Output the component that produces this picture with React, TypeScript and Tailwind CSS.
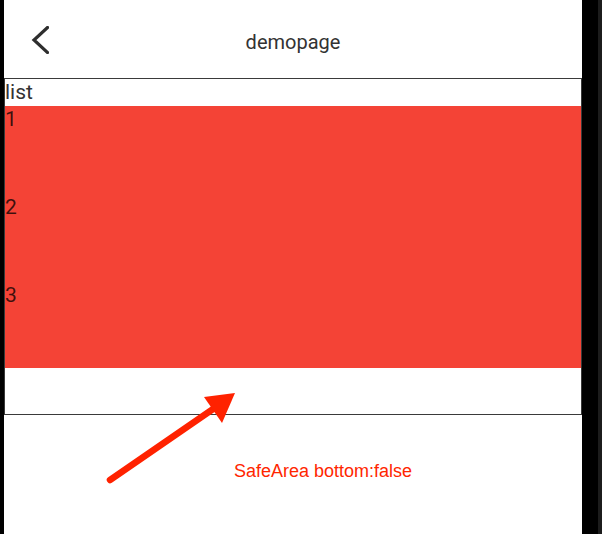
import React from 'react';

const rows = ['1', '2', '3'];

const BackIcon = () => (
  <svg width="18" height="28" viewBox="0 0 18 28" fill="none">
    <polyline points="16.5,1.5 3,14 16.5,26.5" stroke="#2e2e2e" strokeWidth="3.2" strokeLinecap="square" />
  </svg>
);

// red annotation arrow drawn over the page
const Arrow = () => (
  <svg className="absolute left-0 top-0 pointer-events-none" width="602" height="534" viewBox="0 0 602 534">
    <line x1="110" y1="480" x2="216" y2="407" stroke="#ff2200" strokeWidth="6.5" strokeLinecap="round" />
    <polygon points="204,397 235,393 222,423" fill="#ff2200" />
  </svg>
);

export default function App() {
  return (
    <div className="relative flex h-[534px] w-[602px] overflow-hidden bg-black font-['Roboto',sans-serif]">
      <div className="w-[4px] bg-black" />
      <div className="flex w-[578px] flex-col bg-white">
        {/* app bar */}
        <div className="flex h-[78px] items-center">
          <div className="flex h-full w-[60px] items-center pl-[27px] pt-[1px]">
            <BackIcon />
          </div>
          <div className="flex-1 pt-[5px] text-center text-[20px] leading-[28px] text-[#333]">demopage</div>
          <div className="w-[60px]" />
        </div>

        {/* list box */}
        <div className="flex h-[337px] flex-col border border-[#3a3a3a]">
          <div className="h-[27px] text-[21px] leading-[27px] text-[#333]">list</div>
          <div className="h-[262px] overflow-hidden bg-[#f44336]">
            {rows.map((r) => (
              <div key={r} className="h-[88px] text-[21px] leading-[27px] text-black/75">
                {r}
              </div>
            ))}
          </div>
        </div>

        <div className="mt-[44px] pl-[230px] font-['Liberation_Sans',Arial,sans-serif] text-[18px] leading-[24px] text-[#ff2600]">
          SafeArea bottom:false
        </div>
      </div>
      <div className="flex w-[20px]">
        <div className="w-[16px] bg-black" />
        <div className="w-[4px] bg-[#1c1c1c]" />
      </div>
      <Arrow />
    </div>
  );
}
